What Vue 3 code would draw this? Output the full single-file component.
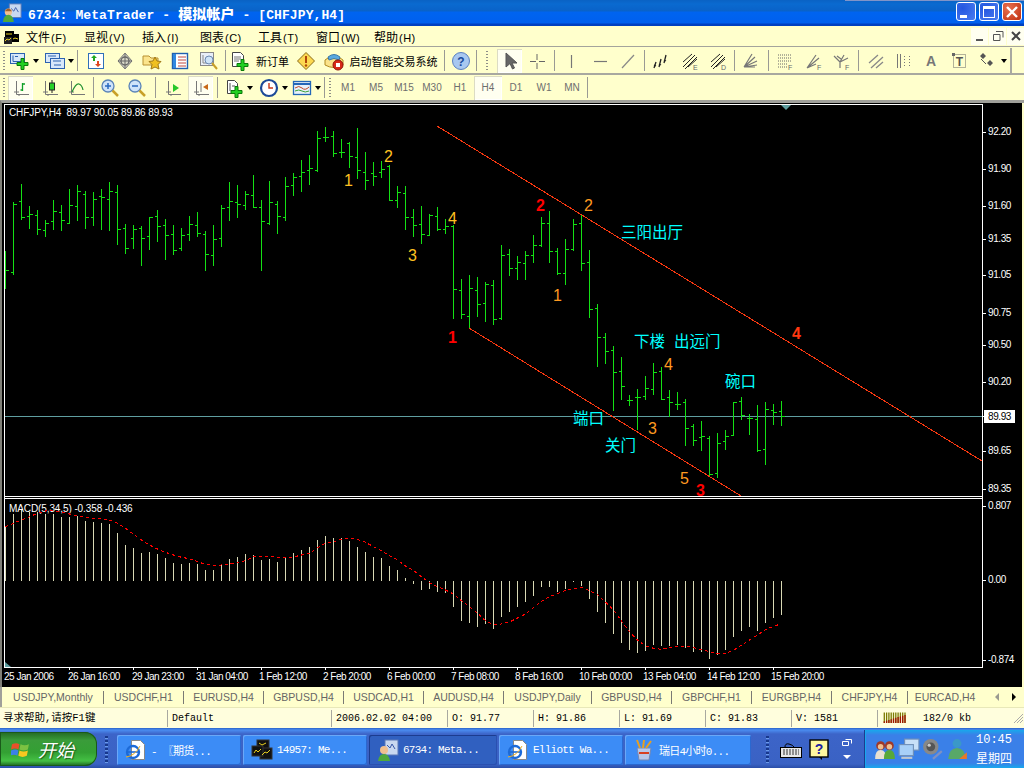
<template>
  <div class="win">
    <div class="titlebar">
      <svg class="app-ico" viewBox="0 0 22 22" v-html="icons.app"></svg>
      <span class="title">6734: MetaTrader - <b>模拟帐户</b> - [CHFJPY,H4]</span>
      <div class="caps">
        <div class="cap blue"><i class="cap-min"></i></div>
        <div class="cap blue"><i class="cap-max"></i></div>
        <div class="cap red">
          <svg viewBox="0 0 20 20" width="20" height="20"><path d="M5 5l10 10M15 5L5 15" stroke="#fff" stroke-width="2.4"/></svg>
        </div>
      </div>
      <div class="other-edge"></div>
    </div>

    <div class="menubar">
      <svg class="menu-ico" viewBox="0 0 16 16" v-html="icons.mt"></svg>
      <div v-for="m in menus" :key="m[0]" class="menu-item"><span>{{ m[0] }}</span><small>({{ m[1] }})</small></div>
      <div class="mdi">
        <div class="mdi-btn"><svg viewBox="0 0 14 14"><path d="M3 10h7v2H3z" fill="#555"/></svg></div>
        <div class="mdi-btn"><svg viewBox="0 0 14 14"><path d="M5 2.5h7v6M2.5 5.5h6.500v6h-6.500z" fill="none" stroke="#555"/></svg></div>
        <div class="mdi-btn"><svg viewBox="0 0 14 14"><path d="M3 3l8 8M11 3l-8 8" stroke="#444" stroke-width="2"/></svg></div>
      </div>
    </div>

    <div class="toolbar tb1">
      <template v-for="(it, i) in toolbar1" :key="i">
        <div :class="['cell', it.kind, { on: it.on }]" :style="{ width: it.w + 'px' }">
          <svg v-if="it.icon" class="ico" viewBox="0 0 20 20" v-html="icons[it.icon]"></svg>
          <span v-if="it.label" class="tb-label">{{ it.label }}</span>
          <i v-if="it.caret" class="caret"></i>
        </div>
      </template>
      <div class="tb-end"></div>
    </div>

    <div class="toolbar tb2">
      <template v-for="(it, i) in toolbar2" :key="i">
        <div :class="['cell', it.kind, { on: it.on }]" :style="{ width: it.w + 'px' }">
          <svg v-if="it.icon" class="ico" viewBox="0 0 20 20" v-html="icons[it.icon]"></svg>
          <span v-if="it.period" class="period">{{ it.period }}</span>
          <i v-if="it.caret" class="caret"></i>
        </div>
      </template>
    </div>

    <div class="chart">
      <svg class="plot" width="1020" height="584" viewBox="2 103 1020 584">
        <!-- frames -->
        <path class="frame" d="M4.500 104.500H982.500V667.500H4.500zM4.500 496.500H982.500M4.500 498.500H982.500" />
        <path class="frame" :d="axisTicks" />
        <path d="M781 105h10l-5 5z" fill="#5f9ea0" />
        <path d="M5 662v5h6z" fill="#5f9ea0" />

        <!-- price -->
        <path class="hline" d="M5 416.500H982" />
        <path class="bars" :d="barsPath" />
        <line class="channel" x1="437" y1="126" x2="982" y2="461" />
        <line class="channel" x1="469" y1="328" x2="741" y2="496" />

        <text v-for="n in numbers" :key="n.x + '-' + n.y" :x="n.x" :y="n.y" :fill="n.c" :class="['num', { bold: n.bold }]">{{ n.t }}</text>
        <text v-for="n in notes" :key="n.t" :x="n.x" :y="n.y" class="note">{{ n.t }}</text>

        <text x="9" y="115.500" class="axis legend">CHFJPY,H4&#160;&#160;89.97 90.05 89.86 89.93</text>
        <text x="9" y="512" class="axis legend">MACD(5,34,5) -0.358 -0.436</text>

        <text v-for="p in priceLabels" :key="p.t" x="988" :y="p.y + 2.500" class="axis price">{{ p.t }}</text>
        <rect x="984" y="410" width="31" height="13" fill="#fff" />
        <text x="988" y="420" class="axis price dark">89.93</text>

        <text v-for="t in timeLabels" :key="t.t" :x="t.x" y="680" class="axis time">{{ t.t }}</text>

        <!-- macd -->
        <path class="hist" :d="histPath" />
        <polyline class="signal" :points="signalPoints" />
      </svg>
    </div>

    <div class="tabs">
      <div v-for="t in tabs" :key="t[0] + t[1]" class="tab" :style="{ width: t[1] + 'px' }">{{ t[0] }}</div>
      <div class="tab-arrows">
        <svg viewBox="0 0 8 10" width="8" height="10"><path d="M6 1v8L2 5z" fill="#9a9a90"/></svg>
        <svg viewBox="0 0 8 10" width="8" height="10"><path d="M2 1v8l4-4z" fill="#000"/></svg>
      </div>
    </div>

    <div class="status">
      <div v-for="s in statusCells" :key="s[0]" class="st-cell" :style="{ width: s[1] + 'px' }">{{ s[0] }}</div>
      <div class="st-cell meter-cell">
        <svg width="24" height="12" viewBox="0 0 24 12">
          <path v-for="k in 10" :key="k" :d="'M' + (k * 2.300 - 1) + ' 0.500V11'" stroke="#7a7a00" stroke-width="1.300" />
          <path v-for="k in 10" :key="'r' + k" :d="'M' + (k * 2.300 - 1) + ' ' + (10 - k * 0.700) + 'V11'" stroke="#a01000" stroke-width="1.300" />
        </svg>
        <span class="kb">182/0 kb</span>
      </div>
      <svg class="grip" viewBox="0 0 12 12" width="12" height="12"><path d="M11 2L2 11M11 5l-6 6M11 8l-3 3" stroke="#aaa"/></svg>
    </div>

    <div class="taskbar">
      <div class="start">
        <svg viewBox="0 0 18 18" width="19" height="19">
          <path d="M1 4q4-2 7 0l-1 5q-3-2-7 0z" fill="#e8502a"/>
          <path d="M9 4q4 2 8 0l-1 5q-4 2-8 0z" fill="#7cc242"/>
          <path d="M0 10q4-2 7 0l-1 5q-3-2-7 0z" fill="#3c80e8"/>
          <path d="M8 10q4 2 8 0l-1 5q-4 2-8 0z" fill="#f8c820"/>
        </svg>
        <span>开始</span>
      </div>
      <div class="dots"></div>
      <div v-for="b in taskButtons" :key="b.t" :class="['task', { active: b.active }]" :style="{ width: b.w + 'px' }">
        <svg viewBox="0 0 22 22" width="22" height="22" v-html="icons[b.icon]"></svg>
        <span>{{ b.t }}</span>
      </div>
      <div class="dots second"></div>
      <svg class="ql" viewBox="0 0 22 22" width="22" height="22" v-html="icons.keyboard"></svg>
      <svg class="ql" viewBox="0 0 22 22" width="22" height="22" v-html="icons.helpbox"></svg>
      <div class="ql-more">
        <svg viewBox="0 0 10 8" width="10" height="8"><path d="M3.500.500h6v4M.500 2.500h6v4h-6z" fill="none" stroke="#fff"/></svg>
        <svg viewBox="0 0 8 5" width="8" height="5"><path d="M0 0h8L4 4z" fill="#fff"/></svg>
      </div>
      <div class="tray">
        <svg viewBox="0 0 20 20" width="22" height="22" v-html="icons.people"></svg>
        <svg viewBox="0 0 20 20" width="22" height="22" v-html="icons.computers"></svg>
        <svg viewBox="0 0 20 20" width="22" height="22" v-html="icons.speaker"></svg>
        <svg viewBox="0 0 20 20" width="22" height="22" v-html="icons.net"></svg>
        <div class="clock"><span>10:45</span><span class="cjk">星期四</span></div>
      </div>
    </div>
  </div>
</template>

<script setup>
const menus = [['文件', 'F'], ['显视', 'V'], ['插入', 'I'], ['图表', 'C'], ['工具', 'T'], ['窗口', 'W'], ['帮助', 'H']]

const icons = {
  app: '<rect x="8" y="1" width="13" height="15" fill="#c8d8f0" stroke="#5a78b8"/><path d="M10 6l3 3 2-4 3 5" stroke="#3858a8" fill="none"/><circle cx="7" cy="10" r="4" fill="#f0c090"/><path d="M1 21q1-8 6-8t6 8z" fill="#4fa83c"/><path d="M3 9q4-6 8 0z" fill="#a0602c"/>',
  mt: '<rect x="1" y="3" width="9" height="8" fill="#000"/><rect x="7" y="6" width="8" height="8" fill="#000"/><rect x="0" y="9" width="8" height="7" fill="#222"/><path d="M2 6h6M1 13l2-2 2 1 2-2M9 11l2-1 3 1" stroke="#e8d020" fill="none"/>',
  newchart: '<rect x=".5" y="2.500" width="14" height="10" fill="#d8e8fa" stroke="#2c62b0"/><path d="M3 4.500v6h8M5 5.500h3" stroke="#2c62b0" fill="none"/><path d="M11 7.500h3v4h4v3h-4v4h-3v-4H7v-3h4z" fill="#22d022" stroke="#0a7a0a"/>',
  profile: '<rect x=".5" y="2.500" width="14" height="9" fill="#d8e8fa" stroke="#2c62b0"/><rect x="5.500" y="7.500" width="14" height="10" fill="#d8e8fa" stroke="#2c62b0"/><path d="M3 5h8M8 10h8M9 14h7" stroke="#2c62b0"/>',
  market: '<rect x="2.500" y="2.500" width="15" height="15" fill="#fff" stroke="#3070b8"/><path d="M8 4l3 3H9v3H7V7H5z" fill="#20a820"/><path d="M12 16l-3-3h2v-3h2v3h2z" fill="#e04820"/>',
  cross: '<path d="M10 2l7 8-7 8-7-8z" fill="#d8d8c8" stroke="#777"/><circle cx="10" cy="10" r="4" fill="none" stroke="#666" stroke-width="1.400"/><path d="M10 3v14M3 10h14" stroke="#666"/>',
  star: '<path d="M1 5h6l2 2h7v7H1z" fill="#fbe48c" stroke="#b89030"/><path d="M13 6l2 4 4 .5-3 3 1 4.500-4-2-4 2 1-4.500-3-3 4-.5z" fill="#f0c020" stroke="#a07818"/>',
  terminal: '<rect x="2.500" y="2.500" width="15" height="15" fill="#fff" stroke="#2060b0" stroke-width="1.400"/><rect x="3" y="3" width="3" height="14" fill="#3088e0"/><path d="M8 6h8M8 9h8M8 12h8M8 15h8" stroke="#c04840"/>',
  tester: '<rect x="1.500" y="1.500" width="13" height="13" fill="#e8eef8" stroke="#888"/><path d="M4 4v8h8" stroke="#888" fill="none"/><circle cx="10" cy="9" r="4" fill="#cfe4f8" stroke="#6a88b0"/><path d="M13 12l5 6" stroke="#c8a028" stroke-width="2"/>',
  order: '<path d="M2.500 1.500h8l3 3v11h-11z" fill="#fff" stroke="#444"/><path d="M4 6h7M4 8h7M4 10h5" stroke="#777"/><path d="M11 8.500h3v4h4v3h-4v4h-3v-4H7v-3h4z" fill="#22d022" stroke="#0a7a0a"/>',
  warn: '<path d="M10 1.500L18.500 10 10 18.500 1.500 10z" fill="#fcd850" stroke="#8a6a18"/><path d="M10 5v7" stroke="#b04808" stroke-width="2"/><circle cx="10" cy="14.500" r="1.200" fill="#b04808"/>',
  auto: '<path d="M1 9q9-8 18 0v5q-9 5-18 0z" fill="#fbe38a" stroke="#b08a20"/><path d="M4 6q6-5 12 0l-1 3q-5-3-10 0z" fill="#58a8e0" stroke="#3a78a8"/><circle cx="14" cy="14" r="5" fill="#d82818" stroke="#901408"/><rect x="12" y="12" width="4" height="4" fill="#fff"/>',
  help: '<circle cx="10" cy="10" r="8.500" fill="#a8c8f0" stroke="#5a80c0"/><text x="10" y="14.500" font-size="12" font-weight="700" text-anchor="middle" fill="#1a4a9a" font-family="Liberation Sans,sans-serif">?</text>',
  cursor: '<path d="M6 2v14l4-3.500 2.500 5.500 2-1-2.500-5h5z" fill="#666" stroke="#555"/>',
  crosshair: '<path d="M10 3v6M10 12v6M3 10.500h6M12 10.500h6" stroke="#666"/>',
  vline: '<path d="M10.500 4v13" stroke="#777" stroke-width="1.200"/>',
  hline: '<path d="M4 10.500h13" stroke="#777" stroke-width="1.200"/>',
  trend: '<path d="M4 17L16 4" stroke="#888" stroke-width="1.200"/>',
  channel: '<path d="M3 17l2-6M3 14l2 1M8 16l2-8M8 13l2 1M13 12l2-8M13 9l2 1" stroke="#222" stroke-width="1.300"/>',
  channelE: '<path d="M3 16L15 4M5 18L17 6M3 11l9-8M8 16l9-8" stroke="#222"/><text x="13" y="19" font-size="7" fill="#666" font-family="Liberation Sans,sans-serif">E</text>',
  channelD: '<path d="M3 16L15 4M5 18L17 6M3 11l9-8M8 16l9-8" stroke="#222"/><text x="13" y="19" font-size="7" fill="#666" font-family="Liberation Sans,sans-serif">D</text>',
  fan: '<path d="M3 16L11 3M3 16L14 6M3 16l13-6M3 16l13-2M3 16h11" stroke="#777" stroke-width="1.200"/>',
  fibo: '<path d="M3 4h13M3 7h13M3 10h13M3 13h9M3 16h9" stroke="#666" stroke-dasharray="1 1"/><text x="13" y="19" font-size="7" fill="#666" font-family="Liberation Sans,sans-serif">F</text>',
  fibofan: '<path d="M3 17L12 4M3 17L15 7M3 17l9-4" stroke="#777" stroke-width="1.200"/><text x="13" y="19" font-size="7" fill="#666" font-family="Liberation Sans,sans-serif">F</text>',
  fork: '<path d="M2 5l6 6 4-7M8 11v6M8 11l8-4M5 5l4 3" stroke="#777" fill="none" stroke-width="1.200"/><text x="13" y="19" font-size="7" fill="#666" font-family="Liberation Sans,sans-serif">F</text>',
  parallel: '<path d="M3 12l9-8M5 17L17 6M10 17l7-6" stroke="#888" stroke-width="1.300"/>',
  cycle: '<path d="M3.500 3v14M6.500 3v14M10.500 3v14M15.500 3v14" stroke="#777"/><path d="M10.500 3v14M15.500 3v14" stroke="#fffdcc" stroke-dasharray="2 1"/>',
  letterA: '<text x="10" y="15" font-size="14" font-weight="700" text-anchor="middle" fill="#777" font-family="Liberation Sans,sans-serif">A</text>',
  letterT: '<rect x="3.500" y="3.500" width="12" height="13" fill="none" stroke="#666" stroke-dasharray="1 1"/><rect x="2" y="2" width="3" height="3" fill="#666"/><text x="9.500" y="14.500" font-size="12" font-weight="700" text-anchor="middle" fill="#555" font-family="Liberation Sans,sans-serif">T</text>',
  diamonds: '<path d="M5 2l3 3-3 3-3-3zM12 9l3 3-3 3-3-3z" fill="#555"/><path d="M3 8l5 5" stroke="#555"/>',
  barchart: '<path d="M5.500 3v13.500H18" stroke="#777" fill="none"/><path d="M3 14h5M8 16v2" stroke="#777"/><path d="M11.500 5v8M9.500 12h2M11.500 6h2.500" stroke="#10a028" stroke-width="1.300"/>',
  candles: '<path d="M5.500 3v13.500H18" stroke="#777" fill="none"/><path d="M3 14h5M8 16v2" stroke="#777"/><path d="M12 2v13" stroke="#222"/><rect x="9.500" y="5" width="5" height="7" fill="#28d028" stroke="#222"/>',
  linechart: '<path d="M4.500 3v13.500H18" stroke="#777" fill="none"/><path d="M2 14h5" stroke="#777"/><path d="M5 14q4-9 7-8t4 6" stroke="#209030" fill="none" stroke-width="1.200"/>',
  zoomin: '<circle cx="8" cy="8" r="6" fill="#cfe4fa" stroke="#5a84b8" stroke-width="1.300"/><path d="M5 8h6M8 5v6" stroke="#2868c0" stroke-width="1.500"/><path d="M12.500 12.500l5.500 5.500" stroke="#c8a028" stroke-width="2.500"/>',
  zoomout: '<circle cx="8" cy="8" r="6" fill="#cfe4fa" stroke="#5a84b8" stroke-width="1.300"/><path d="M5 8h6" stroke="#2868c0" stroke-width="1.500"/><path d="M12.500 12.500l5.500 5.500" stroke="#c8a028" stroke-width="2.500"/>',
  shift: '<path d="M5.500 3v13.500H18" stroke="#777" fill="none"/><path d="M3 14h5M8 16v2" stroke="#777"/><path d="M10 6l6 4-6 4z" fill="#28c828"/>',
  autoscroll: '<path d="M5.500 3v13.500H18" stroke="#777" fill="none"/><path d="M3 14h5M8 16v2M10 5v9" stroke="#777"/><path d="M12 9l5-3v6z" fill="#c86818"/>',
  indicator: '<path d="M3.500 2.500h7l3 3v10h-10z" fill="#fff" stroke="#444"/><path d="M6 5v8M8 8h3" stroke="#555"/><path d="M11 8.500h3v4h4v3h-4v4h-3v-4H7v-3h4z" fill="#22d022" stroke="#0a7a0a"/>',
  clock: '<circle cx="10" cy="10" r="8" fill="#fff" stroke="#1c4a98" stroke-width="2.200"/><path d="M10 5v5h4" stroke="#c83818" stroke-width="1.400" fill="none"/>',
  template: '<rect x="1.500" y="3.500" width="17" height="13" fill="#e8f2fa" stroke="#2468b8" stroke-width="1.300"/><path d="M1.500 6h17" stroke="#2468b8" stroke-width="2"/><path d="M3 10q4-3 7 0t7-1" stroke="#c04828" fill="none"/><path d="M3 13q4-2 7 0t7 0" stroke="#38a038" fill="none"/>',
  ie: '<path d="M6.500 1.500h9l4 4v15h-13z" fill="#fff" stroke="#888"/><circle cx="8" cy="13" r="6" fill="none" stroke="#1c6ad8" stroke-width="2.400"/><path d="M2 13h11" stroke="#1c6ad8" stroke-width="1.600"/><path d="M1 18q9-1 14-11" stroke="#f0b020" fill="none"/>',
  mts: '<rect x="6" y="1" width="12" height="10" fill="#111" stroke="#333"/><rect x="9" y="9" width="12" height="11" fill="#111" stroke="#333"/><rect x="1" y="7" width="11" height="10" fill="#111" stroke="#333"/><path d="M3 14l2-3 2 2 3-3M11 16l3-3 2 1 3-3M8 4l3 2 4-2" stroke="#e8d020" fill="none"/>',
  app22: '<rect x="8" y="1" width="13" height="15" fill="#c8d8f0" stroke="#5a78b8"/><path d="M10 6l3 3 2-4 3 5" stroke="#3858a8" fill="none"/><circle cx="7" cy="11" r="4" fill="#f0c090"/><path d="M1 22q1-7 6-7t6 7z" fill="#4fa83c"/>',
  pencils: '<path d="M4 9h14l-2 12H6z" fill="#b8c8e8" stroke="#7088b8"/><path d="M7 9L4 1M10 9l1-8M13 9l5-7" stroke="#e8a020" stroke-width="2"/><path d="M6 14h10" stroke="#d84020" stroke-width="2"/>',
  keyboard: '<rect x=".5" y="8.500" width="21" height="10" fill="#e8e8e8" stroke="#000"/><path d="M3 11h16M3 13h16M3 15h16" stroke="#333" stroke-dasharray="2 1"/><path d="M5 8q0-4 4-3t5 3" stroke="#000" fill="none"/>',
  helpbox: '<rect x="2" y="1" width="18" height="17" fill="#fff8a0" stroke="#000" stroke-width="1.400"/><path d="M11 18l3 3v-3z" fill="#000"/><text x="11" y="15" font-size="14" font-weight="700" text-anchor="middle" fill="#2020a0" font-family="Liberation Sans,sans-serif">?</text>',
  people: '<circle cx="6" cy="7" r="4" fill="#a03828"/><circle cx="14" cy="7" r="4" fill="#a03828"/><circle cx="6" cy="8" r="2.500" fill="#f0c090"/><circle cx="14" cy="8" r="2.500" fill="#f0c090"/><path d="M1 19q0-8 5-8t5 8z" fill="#e8e0d0"/><path d="M9 19q0-8 5-8t5 8z" fill="#58a838"/>',
  computers: '<rect x="6" y="1" width="13" height="10" fill="#c8e0f8" stroke="#7090b8"/><rect x="1" y="6" width="13" height="10" fill="#a8d0f8" stroke="#7090b8"/><path d="M3 18h10" stroke="#c0c8d0" stroke-width="2"/>',
  speaker: '<circle cx="8" cy="8" r="7" fill="#888"/><circle cx="8" cy="8" r="4" fill="#555"/><circle cx="6.500" cy="6.500" r="1.500" fill="#ccc"/><path d="M10 19l8-7" stroke="#8090c0" stroke-width="2"/>',
  net: '<circle cx="10" cy="5" r="4" fill="#3a98c8"/><path d="M2 19q1-10 8-10t8 10z" fill="#58a868"/><path d="M12 19l7-6v6z" fill="#e87828"/>'
}

const gap = (w) => ({ kind: 'gap', w })
const sep = (w) => ({ kind: 'sep', w })
const grip = (w) => ({ kind: 'gripper', w })

const toolbar1 = [
  grip(8),
  { w: 32, icon: 'newchart', caret: true }, gap(3),
  { w: 32, icon: 'profile', caret: true }, sep(5),
  { w: 32, icon: 'market' }, { w: 26, icon: 'cross' }, { w: 28, icon: 'star' },
  { w: 28, icon: 'terminal' }, { w: 30, icon: 'tester' }, sep(3),
  { w: 65, icon: 'order', label: '新订单' }, { w: 28, icon: 'warn' },
  { w: 121, icon: 'auto', label: '启动智能交易系统' }, sep(6),
  { w: 28, icon: 'help' }, sep(3), gap(4), grip(10), gap(5),
  { w: 25, icon: 'cursor', on: true }, { w: 30, icon: 'crosshair' }, sep(4),
  { w: 30, icon: 'vline' }, { w: 28, icon: 'hline' }, { w: 28, icon: 'trend' }, sep(4),
  { w: 30, icon: 'channel' }, { w: 28, icon: 'channelE' }, { w: 28, icon: 'channelD' }, sep(4),
  { w: 30, icon: 'fan' }, sep(5),
  { w: 28, icon: 'fibo' }, { w: 29, icon: 'fibofan' }, { w: 28, icon: 'fork' }, sep(5),
  { w: 30, icon: 'parallel' }, { w: 26, icon: 'cycle' }, { w: 28, icon: 'letterA' }, { w: 30, icon: 'letterT' },
  { w: 34, icon: 'diamonds', caret: true }
]

const toolbar2 = [
  grip(8),
  { w: 25, icon: 'barchart', on: true }, { w: 34, icon: 'candles' }, { w: 20, icon: 'linechart' }, sep(12),
  { w: 22, icon: 'zoomin' }, { w: 32, icon: 'zoomout' }, sep(5),
  { w: 30, icon: 'shift' }, { w: 25, icon: 'autoscroll', on: true }, sep(8),
  { w: 35, icon: 'indicator', caret: true }, { w: 34, icon: 'clock', caret: true }, { w: 33, icon: 'template', caret: true }, sep(3),
  grip(8),
  ...['M1', 'M5', 'M15', 'M30', 'H1', 'H4', 'D1', 'W1', 'MN'].map((p) => ({ w: 28, period: p, on: p === 'H4' })),
  sep(3)
]

// [high, low, open, close] as page y pixels, one bar every 8px from x=5
const ohlc = [
  [251,289,270,270],[202,275,272,204],[184,220,201,217],[206,229,216,214],[210,235,215,229],[220,237,230,223],[200,230,221,211],
  [205,231,212,220],[189,224,223,205],[185,221,206,191],[191,229,194,217],[192,226,217,199],[189,230,196,197],[182,231,199,191],
  [185,245,192,229],[224,254,228,248],[225,249,238,229],[226,266,228,238],[217,250,236,217],[210,242,216,226],[219,260,225,235],
  [225,255,234,250],[228,251,248,235],[216,241,234,224],[212,237,225,233],[231,271,234,254],[225,266,255,239],[205,247,238,208],
  [182,221,207,201],[185,218,202,204],[191,210,205,194],[175,208,195,207],[200,271,207,221],[181,225,223,202],[201,234,204,216],
  [177,221,217,186],[173,196,185,177],[160,192,176,172],[155,185,170,168],[131,172,170,138],[127,142,137,137],[131,157,136,153],
  [139,158,152,152],[142,168,143,156],[128,179,157,170],[152,190,172,180],[162,186,173,176],[161,178,172,169],[165,201,166,200],
  [186,208,200,192],[186,230,193,217],[209,237,217,225],[206,244,224,234],[214,236,235,215],[207,231,216,229],[219,234,229,226],
  [225,319,226,289],[279,319,290,314],[275,328,316,288],[277,317,290,304],[282,322,303,284],[280,325,285,319],[245,320,318,255],
  [249,276,254,268],[256,280,268,262],[251,280,263,255],[235,263,255,245],[217,247,245,223],[211,263,223,251],[248,275,251,273],
  [239,285,273,249],[219,251,249,224],[215,271,223,263],[250,318,262,309],[304,367,308,337],[333,364,337,351],[346,411,350,372],
  [357,400,371,386],[395,406,400,400],[389,430,397,397],[376,400,396,388],[363,395,389,372],[367,400,371,399],[390,417,397,402],
  [392,410,404,404],[399,446,402,428],[424,446,426,440],[421,451,437,436],[436,476,438,474],[433,478,473,443],[430,450,441,436],
  [402,436,435,402],[397,420,401,415],[414,435,418,418],[405,452,419,450],[402,465,449,409],[404,425,410,412],[401,426,411,416]
]

// macd bar ends and signal line, page y = 495 + v / 3
const histo = [
  95,57,45,50,52,57,57,65,65,62,78,81,84,87,114,150,159,174,171,177,189,204,207,204,207,225,225,207,192,186,177,180,195,192,201,186,
  174,165,156,135,123,129,130,138,156,171,186,189,213,225,
  249,267,285,282,291,294,336,378,384,396,387,402,366,351,336,321,303,276,276,291,282,261,273,312,351,384,417,444,465,474,468,450,453,
  453,450,459,471,471,492,480,465,426,408,396,408,384,369,360
]
const signal = [
  95,85,75,65,55,48,46,52,57,62,66,70,72,75,85,100,118,135,150,162,172,180,187,191,200,208,212,210,207,204,197,185,185,185,187,187,186,
  180,175,158,145,140,133,130,133,142,155,168,182,195,
  213,226,245,263,275,285,297,317,335,355,377,389,387,381,369,357,338,319,305,296,286,281,277,287,299,321,345,378,410,435,453,460,463,
  458,454,454,458,464,470,475,475,466,450,435,420,404,394,386
]

const barX = (i) => 5.5 + i * 8

const barsPath = ohlc
  .map(([h, l, o, c], i) => {
    const x = barX(i)
    const open = i ? `M${x - 3} ${o + 0.5}H${x}` : ''
    return `M${x} ${h}V${l}${open}M${x} ${c + 0.5}H${x + 3}`
  })
  .join('')

const histPath = histo.map((v, i) => `M${barX(i)} 581V${Math.round(495 + v / 3)}`).join('')
const signalPoints = signal.map((v, i) => `${barX(i)},${(495 + v / 3).toFixed(1)}`).join(' ')

const priceLabels = [
  { t: '92.20', y: 132 }, { t: '91.90', y: 169 }, { t: '91.60', y: 206 }, { t: '91.35', y: 239 }, { t: '91.05', y: 275 },
  { t: '90.75', y: 313 }, { t: '90.50', y: 345 }, { t: '90.20', y: 382 }, { t: '89.65', y: 451 }, { t: '89.35', y: 489 },
  { t: '0.807', y: 506 }, { t: '0.00', y: 580 }, { t: '-0.874', y: 660 }
]

const timeLabels = [
  '25 Jan 2006', '26 Jan 16:00', '29 Jan 23:00', '31 Jan 04:00', '1 Feb 12:00', '2 Feb 20:00', '6 Feb 00:00', '7 Feb 08:00',
  '8 Feb 16:00', '10 Feb 00:00', '13 Feb 04:00', '14 Feb 12:00', '15 Feb 20:00'
].map((t, i) => ({ t, x: i === 0 ? 4 : 5 + i * 64 - (i > 3 ? 1 : 0) - 1 }))

const axisTicks = [
  ...priceLabels.map((p) => `M983 ${p.y + 0.5}H986`),
  'M983 416.500H986',
  ...Array.from({ length: 12 }, (_, i) => `M${69.5 + i * 64} 667V670`)
].join('')

const numbers = [
  { t: '1', x: 344, y: 186, c: '#ffc020' }, { t: '2', x: 384, y: 162, c: '#ffc020' }, { t: '3', x: 408, y: 261, c: '#ffc020' },
  { t: '4', x: 448, y: 224, c: '#ffc020' }, { t: '2', x: 584, y: 211, c: '#ff9a20' }, { t: '1', x: 553, y: 301, c: '#ff9a20' },
  { t: '2', x: 536, y: 211, c: '#ff0000', bold: true }, { t: '1', x: 448, y: 343, c: '#ff0000', bold: true },
  { t: '4', x: 792, y: 339, c: '#ff3810', bold: true }, { t: '3', x: 696, y: 496, c: '#ff0000', bold: true },
  { t: '4', x: 664, y: 370, c: '#ff9a20' }, { t: '3', x: 648, y: 434, c: '#ff9a20' }, { t: '5', x: 680, y: 484, c: '#ff9a20' }
]

const notes = [
  { t: '三阳出厅', x: 621, y: 238 }, { t: '下楼', x: 634, y: 347 }, { t: '出远门', x: 674, y: 347 },
  { t: '碗口', x: 725, y: 387 }, { t: '端口', x: 573, y: 424 }, { t: '关门', x: 605, y: 451 }
]

const tabs = [
  ['USDJPY,Monthly', 101], ['USDCHF,H1', 80], ['EURUSD,H4', 80], ['GBPUSD,H4', 80], ['USDCAD,H1', 80], ['AUDUSD,H4', 80],
  ['USDJPY,Daily', 88], ['GBPUSD,H4', 80], ['GBPCHF,H1', 80], ['EURGBP,H4', 80], ['CHFJPY,H4', 76], ['EURCAD,H4', 74]
]

const statusCells = [
  ['寻求帮助,请按F1键', 168], ['Default', 164], ['2006.02.02 04:00', 116], ['O: 91.77', 86], ['H: 91.86', 86],
  ['L: 91.69', 86], ['C: 91.83', 86], ['V: 1581', 86]
]

const taskButtons = [
  { t: '-  〖期货...', w: 124, icon: 'ie' },
  { t: '14957: Me...', w: 124, icon: 'mts' },
  { t: '6734: Meta...', w: 128, icon: 'app22', active: true },
  { t: 'Elliott Wa...', w: 124, icon: 'ie' },
  { t: '瑞日4小时0...', w: 126, icon: 'pencils' }
]
</script>

<style scoped>
.win {
  width: 1024px;
  height: 768px;
  display: flex;
  flex-direction: column;
  overflow: hidden;
  background: #ffffcc;
  font-family: "Liberation Sans", "Noto Sans CJK SC", sans-serif;
}

.titlebar {
  position: relative;
  height: 26px;
  flex: none;
  display: flex;
  align-items: center;
  background: linear-gradient(#0a62c4 0, #0a6ad0 4px, #0a62c8 11px, #0064f0 12px, #0060ee 23px, #0040c0 24px, #0040c0 26px);
}
.app-ico { width: 20px; height: 20px; margin-left: 2px; flex: none; }
.title {
  margin-left: 6px;
  color: #fff;
  font: bold 13px "Liberation Mono", "Noto Sans CJK SC", monospace;
  letter-spacing: 0.100px;
  white-space: nowrap;
}
.title b { font-size: 14px; }
.caps { margin-left: auto; margin-right: 2px; display: flex; gap: 3px; }
.cap {
  width: 20px;
  height: 19px;
  margin-top: -3px;
  border: 1px solid #fff;
  border-radius: 3px;
  box-sizing: border-box;
  display: flex;
  align-items: center;
  justify-content: center;
}
.cap svg { flex: none; margin: -1px; }
.cap.blue { background: radial-gradient(circle at 30% 30%, #2456e0, #4a7cf0); }
.cap.red { background: radial-gradient(circle at 30% 30%, #e87050, #c03010); }
.cap-min { width: 7px; height: 3px; background: #fff; margin: 9px 6px 0 0; }
.cap-max { width: 12px; height: 12px; border: 1px solid #fff; border-top-width: 3px; box-sizing: border-box; }
.other-edge { position: absolute; top: 0; left: 845px; right: 0; height: 1px; background: #8094c8; }

.menubar {
  height: 21px;
  flex: none;
  display: flex;
  align-items: center;
  border-bottom: 1px solid #a4a49c;
  box-sizing: border-box;
  font-size: 12px;
  color: #000;
}
.menu-ico { width: 16px; height: 16px; margin: 0 6px 0 4px; flex: none; }
.menu-item { width: 58px; flex: none; white-space: nowrap; }
.menu-item small { font-size: 11px; margin-left: 1px; letter-spacing: 0.500px; }
.mdi { margin-left: auto; display: flex; gap: 1px; }
.mdi-btn { width: 17px; height: 17px; background: #fffff0; display: flex; align-items: center; justify-content: center; }
.mdi-btn svg { width: 14px; height: 14px; }

.toolbar { flex: none; display: flex; align-items: center; position: relative; }
.tb1 { margin-top: 1px; border-bottom: 2px solid #a8a8a0; height: 25px; }
.tb2 { height: 25px; }
.tb-end { position: absolute; left: 1010px; top: 0; bottom: 0; width: 2px; background: #a8a8a0; }

.cell {
  flex: none;
  height: 22px;
  display: flex;
  align-items: center;
  justify-content: center;
  gap: 2px;
  box-sizing: border-box;
}
.cell.on { height: 24px; background: #fffff0; box-shadow: inset 1px 1px #dcdcc4, inset -1px -1px #fff; }
.ico { width: 20px; height: 20px; flex: none; }
.cell.sep::before { content: ""; width: 1px; height: 21px; background: #9a9a94; }
.cell.gripper::before { content: ""; width: 2px; height: 20px; background: repeating-linear-gradient(#8e8e88 0 1px, transparent 1px 3px); }
.caret { width: 0; height: 0; border: 3px solid transparent; border-top: 4px solid #000; border-bottom: 0; margin-left: 1px; }
.tb-label { font-size: 11px; margin-left: 4px; white-space: nowrap; color: #000; }
.period { font-size: 10px; color: #6e6e6e; }

.chart { flex: none; height: 587px; display: flex; background: #ffffcc; border-top: 3px solid #a0a09a; border-left: 2px solid #808078; box-sizing: border-box; }
.plot { display: block; background: #000; flex: none; }
.frame { fill: none; stroke: #fff; stroke-width: 1; shape-rendering: crispEdges; }
.hline { stroke: #5f9ea0; stroke-width: 1; shape-rendering: crispEdges; }
.bars { fill: none; stroke: #14e014; stroke-width: 1; shape-rendering: crispEdges; }
.channel { stroke: #f83810; stroke-width: 1; shape-rendering: crispEdges; }
.hist { fill: none; stroke: #d8d8b4; stroke-width: 1; shape-rendering: crispEdges; }
.signal { fill: none; stroke: #ff0000; stroke-width: 1; stroke-dasharray: 3 3; shape-rendering: crispEdges; }
.axis { font: 10px "Liberation Sans", sans-serif; fill: #fff; }
.axis.legend { letter-spacing: -0.100px; }
.axis.price { letter-spacing: -0.400px; }
.axis.time { letter-spacing: -0.500px; }
.axis.dark { fill: #000; }
.num { font: 16px "Liberation Sans", sans-serif; }
.num.bold { font: bold 16px "Liberation Sans", sans-serif; }
.note { font: 15.500px "Noto Sans CJK SC", sans-serif; fill: #00ffff; }

.tabs {
  height: 21px;
  flex: none;
  display: flex;
  align-items: center;
  padding-left: 3px;
  font-size: 10.500px;
  color: #666;
  border-bottom: 1px solid #e8e8b8;
  box-sizing: border-box;
  box-shadow: inset 2px 0 #a0a09a;
}
.tab { flex: none; text-align: center; height: 13px; line-height: 13px; border-right: 1px solid #7a7a74; box-sizing: border-box; }
.tab:nth-child(12) { border-right: 0; }
.tab-arrows { margin-left: auto; margin-right: 6px; display: flex; gap: 9px; }

.status {
  height: 20px;
  flex: none;
  display: flex;
  align-items: center;
  background: #fffedd;
  font: 10px "Liberation Mono", "Noto Sans CJK SC", monospace;
  color: #000;
  position: relative;
}
.st-cell { flex: none; height: 17px; line-height: 17px; padding-left: 4px; box-sizing: border-box; border-right: 1px solid #a8a8a0; white-space: nowrap; }
.st-cell:first-child { font-size: 10.500px; padding-left: 3px; }
.meter-cell { border-right: 0; display: flex; align-items: center; padding-left: 5px; }
.kb { margin-left: 16px; }
.grip { margin-left: auto; }

.taskbar {
  height: 40px;
  flex: none;
  display: flex;
  align-items: center;
  background: linear-gradient(#2a62c8 0, #4a8cf0 2px, #3c64c8 6px, #3a62c4 36px, #2a4ea8 40px);
  color: #fff;
}
.start {
  width: 97px;
  height: 34px;
  margin-top: 2px;
  flex: none;
  display: flex;
  align-items: center;
  gap: 8px;
  box-sizing: border-box;
  padding-left: 11px;
  border-radius: 0 12px 12px 0;
  background: linear-gradient(#246824, #3a9c3a 25%, #33a033 60%, #44c044 85%, #1c6020);
  box-shadow: inset 0 0 0 1px #1a5a1a;
}
.start span { font: italic 18px "Noto Sans CJK SC", sans-serif; color: #fff; text-shadow: 1px 1px 1px #1a5a1a; }
.dots { width: 3px; height: 28px; margin: 3px 9px 0 8px; flex: none; background: repeating-linear-gradient(#18388c 0 2px, #6a9ae8 2px 3px, transparent 3px 4px); }
.dots.second { margin: 3px 11px 0 13px; }
.task {
  height: 30px;
  margin-top: 4px;
  margin-right: 2px;
  flex: none;
  box-sizing: border-box;
  display: flex;
  align-items: center;
  gap: 4px;
  padding-left: 8px;
  background: #3c8cf6;
  border-radius: 2px;
  box-shadow: inset 1px 1px #6aa8f8, inset -1px -1px #2a68d0;
  font: 11px "Liberation Mono", "Noto Sans CJK SC", monospace;
  letter-spacing: -0.750px;
  white-space: nowrap;
}
.task.active { background: #3060c0; box-shadow: inset 1px 1px #1c3c90, inset -1px -1px #2a50b0; }
.ql { flex: none; margin-right: 6px; margin-top: 4px; }
.ql-more { width: 22px; margin-top: 3px; display: flex; flex-direction: column; align-items: center; gap: 8px; flex: none; }
.tray {
  margin-left: auto;
  width: 160px;
  height: 38px;
  margin-top: 2px;
  flex: none;
  display: flex;
  align-items: center;
  gap: 2px;
  box-sizing: border-box;
  padding-left: 10px;
  background: linear-gradient(#18a8ec, #3a80e8 5px, #3a80e8 33px, #18a8ec);
  box-shadow: inset 1px 0 #1c3c90, inset 2px 0 #18a8ec;
}
.clock { flex: 1; display: flex; flex-direction: column; align-items: center; font: 12px "Liberation Mono", monospace; line-height: 17px; margin-right: 6px; }
.clock .cjk { font: 12px "Noto Sans CJK SC", sans-serif; line-height: 17px; }
</style>

<style>
body { margin: 0; }
</style>
